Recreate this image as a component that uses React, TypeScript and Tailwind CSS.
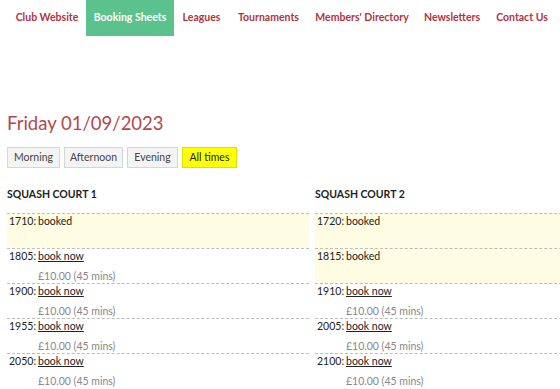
const navItems = [
  { label: "Club Website", w: "w-[78px]" },
  { label: "Booking Sheets", w: "w-[88px]" },
  { label: "Leagues", w: "w-[55px]" },
  { label: "Tournaments", w: "w-[79px]" },
  { label: "Members' Directory", w: "w-[108px]" },
  { label: "Newsletters", w: "w-[72px]" },
  { label: "Contact Us", w: "w-[68px]" },
];

const filters = [
  { label: "Morning", w: "w-[53px]" },
  { label: "Afternoon", w: "w-[59px]" },
  { label: "Evening", w: "w-[51px]" },
  { label: "All times", w: "w-[55px]" },
];

type Slot = { time: string; booked: boolean };

const courts: { name: string; slots: Slot[] }[] = [
  {
    name: "SQUASH COURT 1",
    slots: [
      { time: "1710", booked: true },
      { time: "1805", booked: false },
      { time: "1900", booked: false },
      { time: "1955", booked: false },
      { time: "2050", booked: false },
    ],
  },
  {
    name: "SQUASH COURT 2",
    slots: [
      { time: "1720", booked: true },
      { time: "1815", booked: true },
      { time: "1910", booked: false },
      { time: "2005", booked: false },
      { time: "2100", booked: false },
    ],
  },
];

export default function App() {
  return (
    <div
      className="w-[560px] h-[389px] overflow-hidden bg-white text-[#222]"
      style={{ fontFamily: "Lato, 'Noto Sans', sans-serif" }}
    >
      <nav className="flex h-[36px] pl-[8px]">
        {navItems.map((item) => (
          <a
            key={item.label}
            className={`flex shrink-0 items-center justify-center ${item.w} text-[10.5px] font-bold whitespace-nowrap ${
              item.label === "Booking Sheets"
                ? "bg-[#5cc28d] text-white"
                : "text-[#b3343e]"
            }`}
          >
            {item.label}
          </a>
        ))}
      </nav>

      <div className="px-[7px]">
        <h1 className="mt-[74px] text-[18.5px] leading-[26px] text-[#b5474b]">
          Friday 01/09/2023
        </h1>

        <div className="flex gap-[4px] mt-[11px]">
          {filters.map((f) => (
            <button
              key={f.label}
              className={`h-[21px] ${f.w} text-[10.5px] border ${
                f.label === "All times"
                  ? "bg-[#ffff00] border-[#e0e000] text-[#222]"
                  : "bg-[#f4f4f4] border-[#d6d6d6] text-[#444]"
              }`}
            >
              {f.label}
            </button>
          ))}
        </div>

        <div className="grid grid-cols-[302px_302px] gap-x-[6px] mt-[19px]">
          {courts.map((court) => (
            <div key={court.name}>
              <h2 className="text-[10.5px] font-bold leading-[14px] mb-[12px]">
                {court.name}
              </h2>
              {court.slots.map((s) => (
                <div
                  key={s.time}
                  className={`h-[35px] border-t border-dashed border-[#bdbdbd] px-[2px] text-[10.5px] leading-[15px] ${
                    s.booked ? "bg-[#fefde3]" : ""
                  }`}
                >
                  <div className="flex">
                    <span className="w-[29px]">{s.time}:</span>
                    <span className={s.booked ? "" : "underline"}>
                      {s.booked ? "booked" : "book now"}
                    </span>
                  </div>
                  {!s.booked && (
                    <div className="pl-[29px] mt-[5px] text-[#888]">
                      £10.00 (45 mins)
                    </div>
                  )}
                </div>
              ))}
            </div>
          ))}
        </div>
      </div>
    </div>
  );
}
